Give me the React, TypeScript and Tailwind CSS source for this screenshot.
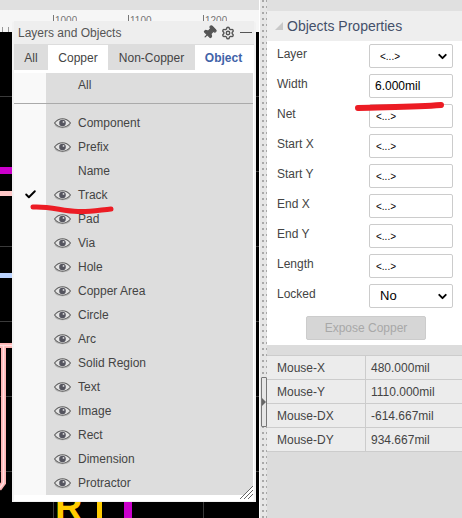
import { Pin, Settings, ChevronDown, Check } from 'lucide-react'

const objects = [
  { name: 'Component', eye: true },
  { name: 'Prefix', eye: true },
  { name: 'Name', eye: false },
  { name: 'Track', eye: true, checked: true },
  { name: 'Pad', eye: true },
  { name: 'Via', eye: true },
  { name: 'Hole', eye: true },
  { name: 'Copper Area', eye: true },
  { name: 'Circle', eye: true },
  { name: 'Arc', eye: true },
  { name: 'Solid Region', eye: true },
  { name: 'Text', eye: true },
  { name: 'Image', eye: true },
  { name: 'Rect', eye: true },
  { name: 'Dimension', eye: true },
  { name: 'Protractor', eye: true },
]

const props = [
  { label: 'Layer', value: '<...>', select: true },
  { label: 'Width', value: '6.000mil', strong: true },
  { label: 'Net', value: '<...>' },
  { label: 'Start X', value: '<...>' },
  { label: 'Start Y', value: '<...>' },
  { label: 'End X', value: '<...>' },
  { label: 'End Y', value: '<...>' },
  { label: 'Length', value: '<...>' },
  { label: 'Locked', value: 'No', select: true, big: true },
]

const mouse = [
  ['Mouse-X', '480.000mil'],
  ['Mouse-Y', '1110.000mil'],
  ['Mouse-DX', '-614.667mil'],
  ['Mouse-DY', '934.667mil'],
]

function Eye() {
  return (
    <svg width="17" height="11" viewBox="0 0 17 11" className="shrink-0">
      <path d="M1 6.5C4 10.5 13 10.5 16 6.5" fill="none" stroke="#b4b4b4" strokeWidth="1.4" />
      <path d="M0.5 5C3 2 5.5 0.8 8.5 0.8S14 2 16.5 5C14 8 11.5 9.2 8.5 9.2S3 8 0.5 5Z" fill="#e4e4e4" stroke="#606060" strokeWidth="1.1" />
      <circle cx="8.5" cy="5" r="3.3" fill="#55555f" />
      <circle cx="9.5" cy="3.9" r="0.9" fill="#ddd" />
    </svg>
  )
}

function Canvas() {
  return (
    <div className="relative flex-1 overflow-hidden bg-black">
      {/* grid */}
      <div className="absolute left-0 top-[64px] h-px w-full bg-[#3a3a3a]" />
      <div className="absolute left-0 top-[139px] h-px w-full bg-[#3a3a3a]" />
      <div className="absolute left-0 top-[214px] h-px w-full bg-[#3a3a3a]" />
      <div className="absolute left-0 top-[289px] h-px w-full bg-[#3a3a3a]" />
      <div className="absolute left-0 top-[364px] h-px w-full bg-[#3a3a3a]" />
      <div className="absolute left-0 top-[439px] h-px w-full bg-[#3a3a3a]" />
      <div className="absolute bottom-0 left-[53px] top-0 w-px bg-[#3a3a3a]" />
      <div className="absolute bottom-0 left-[203px] top-0 w-px bg-[#3a3a3a]" />
      {/* tracks */}
      <div className="absolute left-0 top-[135px] h-[7px] w-[12px] bg-[#cc00cc]" />
      <div className="absolute left-0 top-[159px] h-[5px] w-[12px] bg-[#ffc8c8]" />
      <div className="absolute left-0 top-[241px] h-[5px] w-[12px] bg-[#bcd4ff]" />
      <svg width="12" height="486" className="absolute left-0 top-0">
        <path d="M0 313.5H12M3.5 313.5V451L-1 457" fill="none" stroke="#ffb4b4" strokeWidth="5" />
        <path d="M0 313.5H12M3.5 313.5V451L-1 457" fill="none" stroke="#ffe0e0" strokeWidth="1.5" />
      </svg>
      <div className="absolute left-[55px] top-[456px] text-[38px] font-bold leading-none text-[#ffcc00]">R</div>
      <div className="absolute left-[97px] top-[460px] h-[30px] w-[5px] bg-[#ffcc00]" />
      <div className="absolute left-[124px] top-[460px] h-[30px] w-[8px] bg-[#cc00cc]" />
    </div>
  )
}

function LayersPanel() {
  return (
    <div className="absolute left-[12px] top-[21px] flex h-[481px] w-[244px] flex-col rounded-t-[3px] border-2 border-t-0 border-[#f2f2f2] bg-white text-[12px] text-[#444]">
      <div className="flex h-[23px] shrink-0 items-center justify-between bg-[#eeeeee] pl-[4px] pr-[2px] text-[#555]">
        <span>Layers and Objects</span>
        <div className="flex items-center gap-[4px] text-[#555]">
          <Pin size={15} fill="#555" className="rotate-45" />
          <Settings size={14} strokeWidth={2.4} />
          <div className="ml-[1px] h-px w-[12px] bg-[#555]" />
        </div>
      </div>
      <div className="flex h-[26px] shrink-0 border-t border-[#ddd] text-[#444]">
        <div className="flex w-[34px] items-center justify-center bg-[#dddddd]">All</div>
        <div className="flex w-[60px] items-center justify-center bg-white">Copper</div>
        <div className="flex w-[87px] items-center justify-center bg-[#dddddd]">Non-Copper</div>
        <div className="flex flex-1 items-center justify-center bg-white pr-[2px] font-bold text-[#3f63a8]">Object</div>
      </div>
      <div className="mr-px mt-[3px] flex flex-1 flex-col">
        <div className="flex h-[31px] shrink-0 border-b border-[#aaa]">
          <div className="w-[32px] bg-[#f9f9f9]" />
          <div className="flex-1 bg-[#dddddd] pl-[32px] pt-[3px]">All</div>
        </div>
        <div className="flex flex-1">
          <div className="w-[32px] bg-[#f9f9f9]" />
          <div className="flex flex-1 flex-col bg-[#dddddd] pt-[7px]">
            {objects.map((o) => (
              <div key={o.name} className="relative flex h-[24px] items-center pl-[8px]">
                {o.checked && <Check size={13} strokeWidth={3.5} className="absolute left-[-22px] top-[5px] text-black" />}
                <div className="w-[24px]">{o.eye && <Eye />}</div>
                <span>{o.name}</span>
              </div>
            ))}
          </div>
        </div>
        <div className="h-[6px] shrink-0 bg-white" />
      </div>
      <svg width="15" height="15" viewBox="0 0 15 15" className="absolute bottom-0 right-0">
        <path d="M0 15 15 0V15Z" fill="#fff" />
        <path d="M1 14 14 1M5 14 14 5M9 14 14 9" stroke="#666" strokeWidth="1" />
      </svg>
    </div>
  )
}

function PropRow({ label, value, select, strong, big }: { label: string; value: string; select?: boolean; strong?: boolean; big?: boolean }) {
  return (
    <div className="flex h-[30px] items-start justify-between pl-[10px] pr-[9px]">
      <span className="pt-[1px] text-[#444]">{label}</span>
      <div className={`relative flex h-[24px] w-[84px] items-center rounded-[2px] border border-[#ccc] bg-white text-black ${select ? 'pl-[10px]' : strong ? 'pl-[5px]' : 'pl-[6px]'} ${big ? 'text-[13px]' : strong ? 'text-[12px]' : 'text-[10px]'}`}>
        {value}
        {select && <ChevronDown size={13} strokeWidth={3.5} className="absolute right-[3px] top-[5px] text-black" />}
      </div>
    </div>
  )
}

function PropsPanel() {
  return (
    <div className="flex w-[195px] shrink-0 flex-col bg-[#dcdcdc] text-[12px]">
      <div className="h-[11px] shrink-0 bg-[#e0e0e0]" />
      <div className="flex h-[30px] shrink-0 items-center gap-[4px] bg-[#eeeeee] pl-[8px] text-[14px] text-[#44506a]">
        <div className="h-0 w-0 border-b-[8px] border-l-[8px] border-b-[#c8c8c8] border-l-transparent" />
        <span>Objects Properties</span>
      </div>
      <div className="bg-white pb-[5px] pt-[3px]">
        {props.map((p) => (
          <PropRow key={p.label} {...p} />
        ))}
        <div className="flex justify-center pl-[3px] pt-[2px]">
          <button className="h-[24px] w-[120px] rounded-[2px] border border-[#ccc] bg-[#d6d6d6] text-[#a8a8a8]">Expose Copper</button>
        </div>
      </div>
      <div className="mt-[10px] border-b border-[#ccc] bg-[#ececec] text-[#444]">
        {mouse.map(([k, v]) => (
          <div key={k} className="flex h-[24px] items-center border-t border-[#ccc]">
            <div className="flex h-full w-[99px] items-center border-r border-[#ccc] pl-[10px]">{k}</div>
            <div className="pl-[5px]">{v}</div>
          </div>
        ))}
      </div>
    </div>
  )
}

export default function App() {
  return (
    <div className="relative flex h-[518px] w-[462px] overflow-hidden bg-white font-['Liberation_Sans',Arial,sans-serif]">
      <div className="flex w-[259px] shrink-0 flex-col">
        <div className="h-[10px] shrink-0 bg-[#e0e0e0]" />
        <div className="relative h-[22px] shrink-0 bg-[#f6f6f6] text-[10px] leading-[11px] text-[#777]">
          <span className="absolute left-[53px] top-[5px] h-[6px] overflow-hidden border-l border-[#777] pl-[1px]">1000</span>
          <span className="absolute left-[128px] top-[5px] h-[6px] overflow-hidden border-l border-[#777] pl-[1px]">1100</span>
          <span className="absolute left-[203px] top-[5px] h-[6px] overflow-hidden border-l border-[#777] pl-[1px]">1200</span>
          <div className="absolute bottom-0 left-[2px] h-[5px] w-px bg-[#999]" />
          <div className="absolute bottom-0 left-[8px] h-[5px] w-px bg-[#999]" />
        </div>
        <Canvas />
      </div>
      <div className="w-px shrink-0 bg-white" />
      {/* splitter */}
      <div className="relative flex w-[7px] shrink-0 gap-[2px] bg-[#e6e6e6] pl-[2px]">
        <div className="h-full w-[1.5px] bg-[linear-gradient(#a8a8a8_2px,transparent_2px)] bg-[length:100%_6px]" />
        <div className="h-full w-[1.5px] bg-[linear-gradient(#a8a8a8_2px,transparent_2px)] bg-[length:100%_6px]" />
        <div className="absolute left-[1px] top-[377px] flex h-[50px] w-[6px] items-center rounded-[1px] border border-[#777] bg-[#e6e6e6]">
          <div className="h-0 w-0 border-y-[4px] border-l-[4px] border-y-transparent border-l-[#666]" />
        </div>
      </div>
      <PropsPanel />
      <LayersPanel />
      {/* red marker strokes, drawn on top of the screenshot */}
      <svg width="462" height="518" className="pointer-events-none absolute left-0 top-0">
        <path d="M33 207C50 206 62 211 78 211.5 90 212 100 210 111 209" fill="none" stroke="#ec1c24" strokeWidth="5" strokeLinecap="round" />
        <path d="M358 108C385 107 415 107 441 105" fill="none" stroke="#ec1c24" strokeWidth="6" strokeLinecap="round" />
      </svg>
    </div>
  )
}
